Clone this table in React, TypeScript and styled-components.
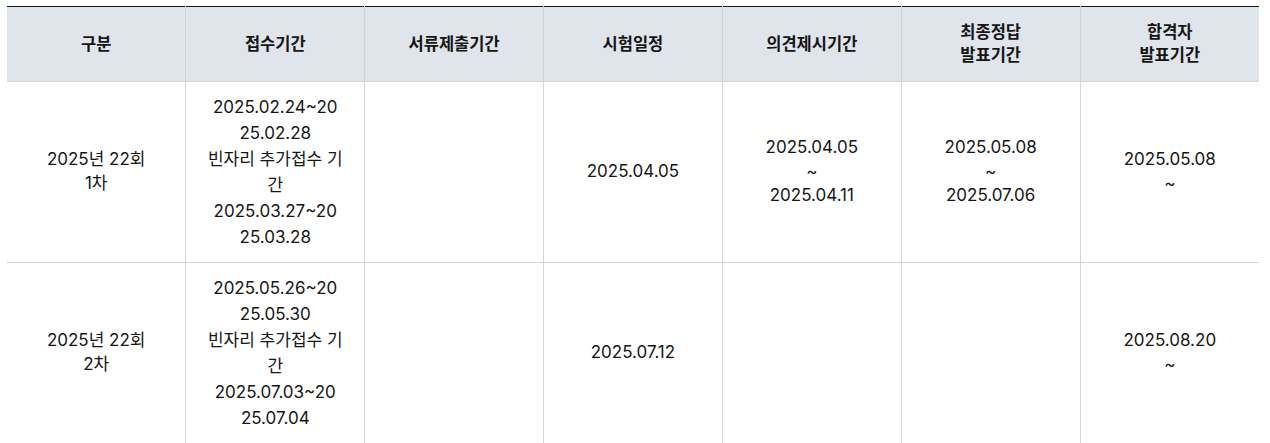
import styled, { createGlobalStyle } from "styled-components";

const GlobalStyle = createGlobalStyle`
  html, body {
    margin: 0;
    padding: 0;
    background: #fff;
  }
  body {
    font-family: Inter, "Noto Sans CJK KR", sans-serif;
    color: #151515;
  }
`;

const Wrapper = styled.div`
  padding: 6px 11px 0 7px;
`;

const Table = styled.table`
  width: 1252px;
  table-layout: fixed;
  border-collapse: collapse;
  border-top: 1px solid #151515;
`;

const HeadCell = styled.th`
  background: #e0e4eb;
  height: 74px;
  padding: 0 10px;
  font-size: 16.5px;
  font-weight: 700;
  line-height: 23px;
  text-align: center;
  vertical-align: middle;
  color: #151515;
  border-bottom: 1px solid #d2d4d8;
  border-left: 1px solid #d2d4d8;
  &:first-child {
    border-left: none;
  }
`;

const Cell = styled.td<{ $loose?: boolean }>`
  padding: 12px 10px;
  font-size: 17px;
  line-height: ${(p) => (p.$loose ? "26px" : "23.8px")};
  text-align: center;
  vertical-align: middle;
  white-space: nowrap;
  border-bottom: 1px solid #d2d4d8;
  border-left: 1px solid #d2d4d8;
  &:first-child {
    border-left: none;
  }
`;

const Line = styled.div``;

type Row = {
  label: string[];
  receipt: string[];
  docs: string[];
  exam: string[];
  objection: string[];
  answer: string[];
  pass: string[];
};

const headers = [
  ["구분"],
  ["접수기간"],
  ["서류제출기간"],
  ["시험일정"],
  ["의견제시기간"],
  ["최종정답", "발표기간"],
  ["합격자", "발표기간"],
];

// lines are kept as they wrap in the narrow column
const rows: Row[] = [
  {
    label: ["2025년 22회", "1차"],
    receipt: [
      "2025.02.24~20",
      "25.02.28",
      "빈자리 추가접수 기",
      "간",
      "2025.03.27~20",
      "25.03.28",
    ],
    docs: [],
    exam: ["2025.04.05"],
    objection: ["2025.04.05", "~", "2025.04.11"],
    answer: ["2025.05.08", "~", "2025.07.06"],
    pass: ["2025.05.08", "~"],
  },
  {
    label: ["2025년 22회", "2차"],
    receipt: [
      "2025.05.26~20",
      "25.05.30",
      "빈자리 추가접수 기",
      "간",
      "2025.07.03~20",
      "25.07.04",
    ],
    docs: [],
    exam: ["2025.07.12"],
    objection: [],
    answer: [],
    pass: ["2025.08.20", "~"],
  },
];

function Lines({ items }: { items: string[] }) {
  return (
    <>
      {items.map((t, i) => (
        <Line key={i}>{t}</Line>
      ))}
    </>
  );
}

export default function App() {
  return (
    <Wrapper>
      <GlobalStyle />
      <Table>
        <thead>
          <tr>
            {headers.map((h, i) => (
              <HeadCell key={i}>
                <Lines items={h} />
              </HeadCell>
            ))}
          </tr>
        </thead>
        <tbody>
          {rows.map((r, i) => (
            <tr key={i}>
              <Cell>
                <Lines items={r.label} />
              </Cell>
              <Cell $loose>
                <Lines items={r.receipt} />
              </Cell>
              <Cell>
                <Lines items={r.docs} />
              </Cell>
              <Cell>
                <Lines items={r.exam} />
              </Cell>
              <Cell>
                <Lines items={r.objection} />
              </Cell>
              <Cell>
                <Lines items={r.answer} />
              </Cell>
              <Cell>
                <Lines items={r.pass} />
              </Cell>
            </tr>
          ))}
        </tbody>
      </Table>
    </Wrapper>
  );
}
